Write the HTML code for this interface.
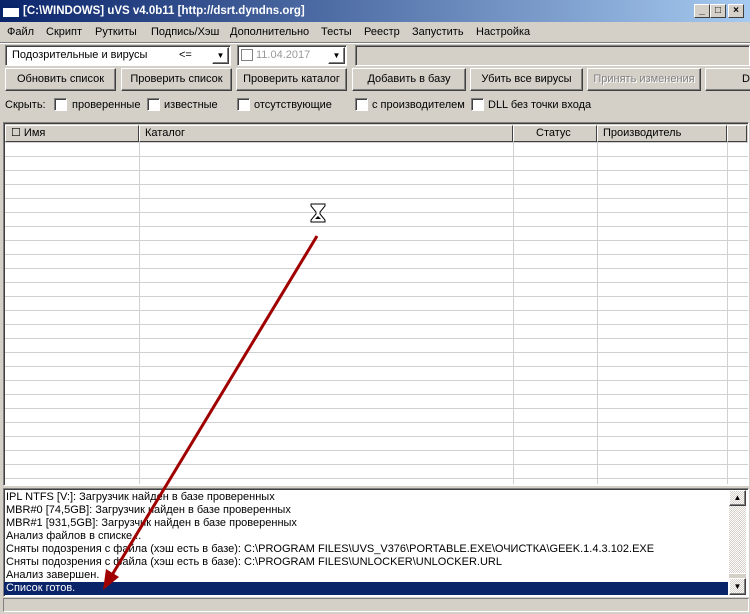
<!DOCTYPE html><html><head><meta charset="utf-8"><style>
*{margin:0;padding:0;box-sizing:border-box}
body{width:750px;height:614px;background:#d4d0c8;font:11px "Liberation Sans",sans-serif;color:#000;position:relative;overflow:hidden}
.a{position:absolute}
.title{left:0;top:0;width:750px;height:22px;background:linear-gradient(90deg,#0a246a,#a6caf0);color:#fff;font-weight:bold;font-size:11.5px;font-family:"Liberation Sans",sans-serif;line-height:22px;padding-left:23px}
.tb{width:16px;height:14px;background:#d4d0c8;border:1px solid;border-color:#fff #404040 #404040 #fff;top:4px;font-size:10px;text-align:center;line-height:12px;color:#000;font-weight:bold}
.menu span{position:absolute;white-space:nowrap}
.btn{height:23px;top:68px;border:1px solid;border-color:#fff #404040 #404040 #fff;box-shadow:inset -1px -1px #808080;text-align:center;line-height:21px}
.sunk{border:1px solid;border-color:#808080 #fff #fff #808080;box-shadow:inset 1px 1px #404040}
.cb{position:absolute;top:98px;width:13px;height:13px;background:#fff;border:1px solid;border-color:#808080 #fff #fff #808080;box-shadow:inset 1px 1px #404040}
.ct{position:absolute;top:99px;white-space:nowrap}
.hd{top:125px;height:17px;border:1px solid;border-color:#fff #404040 #404040 #fff;background:#d4d0c8;line-height:15px;padding-left:5px}
.log div{height:13px;line-height:13px;padding-left:2px;white-space:nowrap}
</style></head><body>
<div class="a title">[C:\WINDOWS] uVS v4.0b11 [http://dsrt.dyndns.org]</div>
<div class="a" style="left:3px;top:5px;width:16px;height:12px;background:#fff;border-top:3px solid #0a246a"></div>
<div class="a tb" style="left:694px">_</div><div class="a tb" style="left:710px">□</div><div class="a tb" style="left:728px">×</div>
<div class="a menu" style="left:0;top:26px;width:750px">
<span style="left:7px">Файл</span><span style="left:46px">Скрипт</span><span style="left:95px">Руткиты</span><span style="left:151px">Подпись/Хэш</span><span style="left:230px">Дополнительно</span><span style="left:321px">Тесты</span><span style="left:364px">Реестр</span><span style="left:412px">Запустить</span><span style="left:476px">Настройка</span></div>
<div class="a" style="left:0;top:42px;width:750px;border-top:1px solid #808080;border-bottom:1px solid #fff"></div>
<div class="a sunk" style="left:5px;top:45px;width:226px;height:21px;background:#fff;padding:3px 0 0 6px">Подозрительные и вирусы<span style="position:absolute;left:173px">&lt;=</span></div>
<div class="a btn" style="left:212px;top:47px;height:17px;width:17px;line-height:15px;font-size:8px">▼</div>
<div class="a sunk" style="left:237px;top:45px;width:110px;height:21px;background:#fff;padding:3px 0 0 18px;color:#999">11.04.2017</div>
<div class="a" style="left:241px;top:49px;width:12px;height:12px;border:1px solid #808080"></div>
<div class="a btn" style="left:328px;top:47px;height:17px;width:17px;line-height:15px;font-size:8px">▼</div>
<div class="a sunk" style="left:355px;top:45px;width:395px;height:21px"></div>
<div class="a btn" style="left:5px;width:111px">Обновить список</div>
<div class="a btn" style="left:121px;width:111px">Проверить список</div>
<div class="a btn" style="left:236px;width:111px">Проверить каталог</div>
<div class="a btn" style="left:352px;width:114px">Добавить в базу</div>
<div class="a btn" style="left:470px;width:113px">Убить все вирусы</div>
<div class="a btn" style="left:587px;width:114px;color:#808080;text-shadow:1px 1px #fff">Принять изменения</div>
<div class="a btn" style="left:705px;width:60px;padding-left:36px;text-align:left">D</div>
<div class="ct" style="left:5px">Скрыть:</div>
<div class="cb" style="left:54px"></div><div class="ct" style="left:72px">проверенные</div>
<div class="cb" style="left:147px"></div><div class="ct" style="left:164px">известные</div>
<div class="cb" style="left:237px"></div><div class="ct" style="left:254px">отсутствующие</div>
<div class="cb" style="left:355px"></div><div class="ct" style="left:372px">с производителем</div>
<div class="cb" style="left:471px"></div><div class="ct" style="left:488px">DLL без точки входа</div>
<div class="a sunk" style="left:3px;top:122px;width:746px;height:364px;background:#fff repeating-linear-gradient(180deg,#fff 0 13px,#d0d0d0 13px 14px);background-position:0 6px"></div>
<div class="a" style="left:5px;top:124px;width:743px;height:18px;background:#d4d0c8"></div>
<div class="a hd" style="left:5px;width:134px">☐ Имя</div>
<div class="a hd" style="left:139px;width:374px">Каталог</div>
<div class="a hd" style="left:513px;width:84px;padding-left:22px">Статус</div>
<div class="a hd" style="left:597px;width:130px">Производитель</div>
<div class="a hd" style="left:727px;width:20px"></div>
<div class="a" style="left:139px;top:143px;height:341px;border-left:1px solid #d0d0d0"></div>
<div class="a" style="left:513px;top:143px;height:341px;border-left:1px solid #d0d0d0"></div>
<div class="a" style="left:597px;top:143px;height:341px;border-left:1px solid #d0d0d0"></div>
<div class="a" style="left:727px;top:143px;height:341px;border-left:1px solid #d0d0d0"></div>
<div class="a sunk log" style="left:3px;top:488px;width:746px;height:109px;background:#fff;padding-top:2px">
<div>IPL NTFS [V:]: Загрузчик найден в базе проверенных</div>
<div>MBR#0 [74,5GB]: Загрузчик найден в базе проверенных</div>
<div>MBR#1 [931,5GB]: Загрузчик найден в базе проверенных</div>
<div>Анализ файлов в списке...</div>
<div>Сняты подозрения с файла (хэш есть в базе): C:\PROGRAM FILES\UVS_V376\PORTABLE.EXE\ОЧИСТКА\GEEK.1.4.3.102.EXE</div>
<div>Сняты подозрения с файла (хэш есть в базе): C:\PROGRAM FILES\UNLOCKER\UNLOCKER.URL</div>
<div>Анализ завершен.</div>
<div style="background:#0a246a;color:#fff;width:724px">Список готов.</div>
</div>
<div class="a" style="left:729px;top:490px;width:17px;height:105px;background:repeating-conic-gradient(#fff 0 25%,#d4d0c8 0 50%) 0 0/2px 2px"></div>
<div class="a btn" style="left:729px;top:490px;width:17px;height:16px;font-size:8px;line-height:14px">▲</div>
<div class="a btn" style="left:729px;top:578px;width:17px;height:17px;font-size:8px;line-height:15px">▼</div>
<div class="a" style="left:729px;top:573px;width:17px;height:5px;background:#d4d0c8;border-top:1px solid #fff"></div>
<div class="a sunk" style="left:3px;top:598px;width:746px;height:14px;box-shadow:none"></div>
<svg class="a" style="left:0;top:0" width="750" height="614">
<g stroke="#000" fill="#fff"><path d="M311 204h14v2l-5 6v2l5 6v2h-14v-2l5-6v-2l-5-6z"/></g>
<path d="M315 219h6l-3-3z" fill="#000"/>
<line x1="317" y1="236" x2="112" y2="575" stroke="#a00000" stroke-width="3"/>
<path d="M103 590l3-21 13 8z" fill="#a00000"/>
</svg>
</body></html>
